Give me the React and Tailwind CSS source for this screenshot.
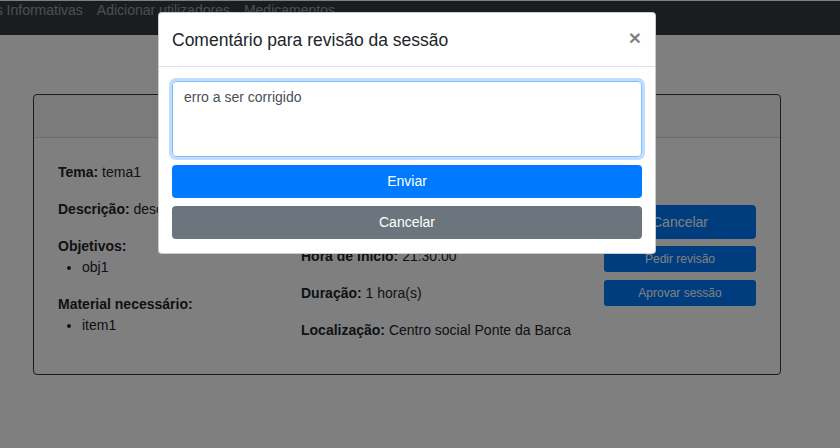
const Field = ({ label, value, last }) => (
  <p className={last ? "leading-[21px]" : "mb-4 leading-[21px]"}>
    <span className="font-bold">{label}</span> {value}
  </p>
);

const App = () => {
  return (
    <div className="relative h-[448px] overflow-hidden bg-white text-[14px] text-[#212529] font-['Liberation_Sans',Arial,sans-serif]">
      <nav className="mt-px h-[34px] bg-[#343a40] flex items-start whitespace-nowrap text-white/50 leading-[18px]">
        <span className="-ml-[51px] pr-[7px]">Sessões Informativas</span>
        <span className="px-[7px]">Adicionar utilizadores</span>
        <span className="px-[7px]">Medicamentos</span>
      </nav>

      <div className="ml-[33px] mt-[59px] w-[748px] rounded-[4px] border border-[#343a40] overflow-hidden">
        <div className="h-[43px] bg-black/[0.03] border-b border-black/[0.125]" />
        <div className="flex pt-[24px] pb-[22px]">
          <div className="w-[267px] pl-[24px] shrink-0">
            <Field label="Tema:" value="tema1" />
            <Field label="Descrição:" value="descrição1" />
            <p className="font-bold leading-[21px]">Objetivos:</p>
            <ul className="list-disc pl-6 mb-4 leading-[21px]">
              <li>obj1</li>
            </ul>
            <p className="font-bold leading-[21px]">Material necessário:</p>
            <ul className="list-disc pl-6 mb-4 leading-[21px]">
              <li>item1</li>
            </ul>
          </div>
          <div className="w-[303px] pt-[10px] shrink-0">
            <Field label="Data:" value="2020-06-10" />
            <Field label="Estado:" value="Por aprovar" />
            <Field label="Hora de início:" value="21:30:00" />
            <Field label="Duração:" value="1 hora(s)" />
            <Field label="Localização:" value="Centro social Ponte da Barca" last />
          </div>
          <div className="w-[152px] pt-[43px] flex flex-col">
            <button className="h-[34px] rounded-[4px] bg-[#007bff] text-white leading-[21px]">Cancelar</button>
            <button className="mt-[7px] h-[26px] rounded-[3px] bg-[#007bff] text-white text-[12px]">Pedir revisão</button>
            <button className="mt-[8px] h-[26px] rounded-[3px] bg-[#007bff] text-white text-[12px]">Aprovar sessão</button>
          </div>
        </div>
      </div>

      <div className="absolute inset-0 bg-black/50">
        <div className="ml-[158px] mt-[12px] w-[498px] rounded-[4px] bg-white border border-black/20">
          <div className="h-[54px] pl-[13px] pr-[14px] flex items-center justify-between border-b border-[#dee2e6]">
            <h5 className="text-[17.5px] leading-[26px] text-[#212529]">Comentário para revisão da sessão</h5>
            <span className="mb-[4px] text-[21px] font-bold leading-none text-black/50">×</span>
          </div>
          <div className="py-[14px] px-[13px] flex flex-col">
            <textarea
              className="h-[76px] w-full resize-none rounded-[4px] border border-[#80bdff] px-[11px] py-[5px] leading-[21px] text-[#495057] shadow-[0_0_0_3px_rgba(0,123,255,0.25)] outline-none"
              defaultValue="erro a ser corrigido"
            />
            <button className="mt-[8px] h-[33px] rounded-[4px] bg-[#007bff] text-white leading-[21px]">Enviar</button>
            <button className="mt-[8px] h-[33px] rounded-[4px] bg-[#6c757d] text-white leading-[21px]">Cancelar</button>
          </div>
        </div>
      </div>
    </div>
  );
};

export default App;
